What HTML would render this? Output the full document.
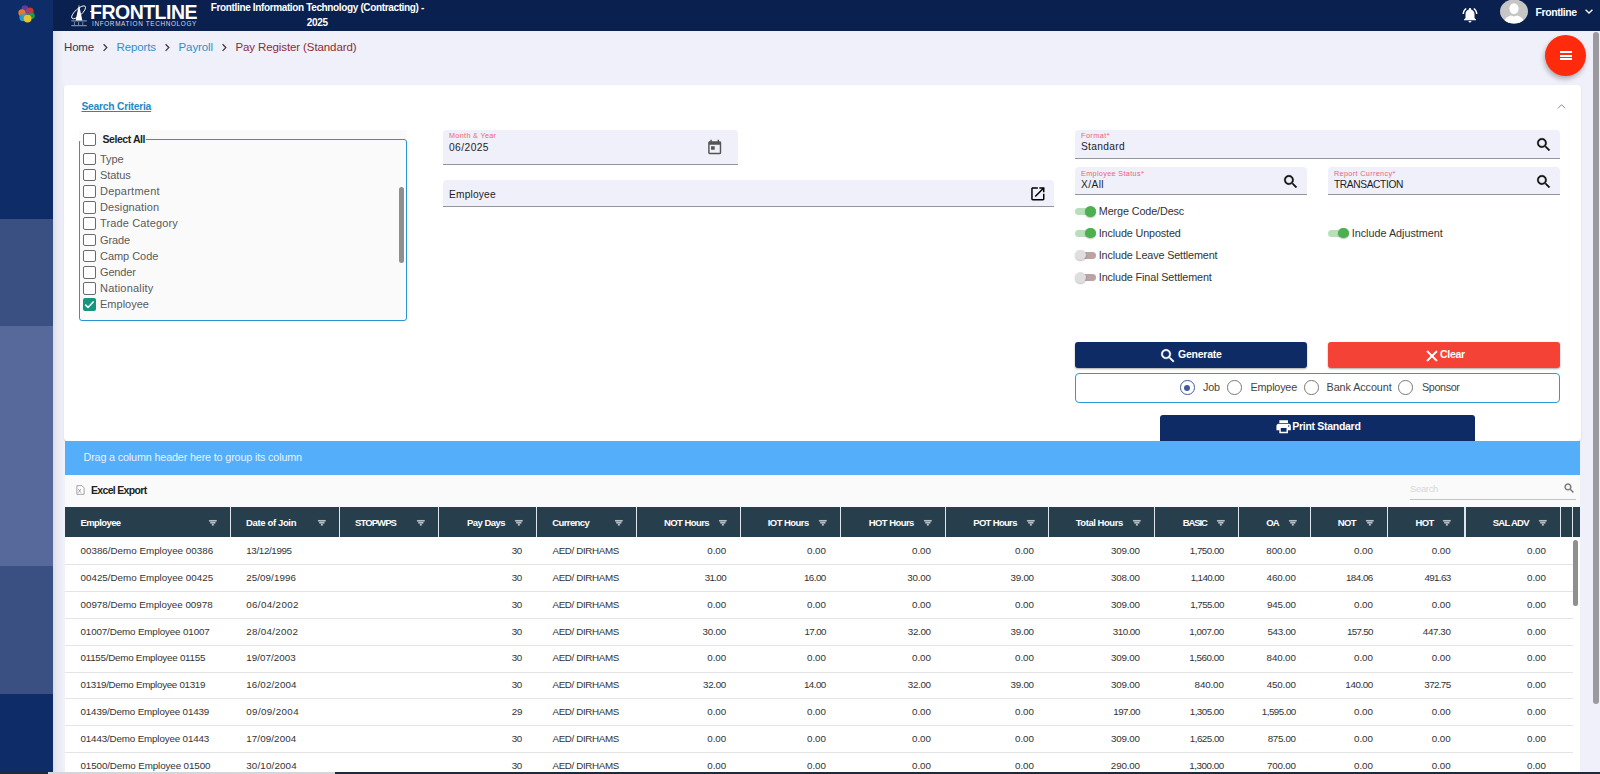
<!DOCTYPE html>
<html lang="en"><head><meta charset="utf-8"><title>Pay Register (Standard)</title>
<style>
html,body{margin:0;padding:0}
body{width:1600px;height:774px;overflow:hidden;position:relative;background:#eff0f9;font-family:"Liberation Sans",Arial,sans-serif;}
.t{position:absolute;white-space:pre;}
svg{position:absolute;overflow:visible}

</style></head>
<body>
<div style="position:absolute;left:53px;top:31px;width:11px;height:743px;background:linear-gradient(to right,#dadce6 0,#e6e7f0 30%,#eff0f9 100%);"></div>
<div style="position:absolute;left:0px;top:0px;width:53px;height:774px;background:#0e2c67;"></div>
<div style="position:absolute;left:0px;top:218.5px;width:53px;height:107.5px;background:#3b5082;"></div>
<div style="position:absolute;left:0px;top:326px;width:53px;height:239.5px;background:#56699a;"></div>
<div style="position:absolute;left:0px;top:565.5px;width:53px;height:128.5px;background:#3b5082;"></div>
<svg style="left:16px;top:3px;opacity:.92" width="22" height="22" viewBox="16 3 22 22"><circle cx="24.9" cy="8.6" r="3.4" fill="#6a3c9c"></circle><circle cx="30" cy="11.2" r="3.6" fill="#e0362c"></circle><circle cx="27.2" cy="12.4" r="3" fill="#a0409a" opacity=".75"></circle><circle cx="21.9" cy="12.8" r="3.6" fill="#f5822a"></circle><circle cx="31.4" cy="15.8" r="3.4" fill="#1fa345"></circle><circle cx="23" cy="17.6" r="3.6" fill="#27a5e0"></circle><circle cx="24.5" cy="14.8" r="2.6" fill="#8a9a80" opacity=".6"></circle><circle cx="27.6" cy="18.6" r="3.9" fill="#fbd426"></circle></svg>
<div style="position:absolute;left:53px;top:0px;width:1547px;height:31px;background:#0a204e;"></div>
<svg style="left:70px;top:3px" width="19" height="25" viewBox="70 3 19 25"><ellipse cx="78.6" cy="12.3" rx="8.9" ry="3.3" transform="rotate(-42 78.6 12.3)" fill="none" stroke="#fff" stroke-width="0.9"></ellipse><path d="M79 4.6 L75.6 20.8 L82.4 20.8 Z" fill="#fff"></path><path d="M71.3 20.9H86.8M71.3 25.7H86.8" stroke="#93a2c0" stroke-width="1" fill="none"></path><path d="M74.4 22v3M78.6 22v3M82.8 22v3" stroke="#93a2c0" stroke-width="0.8" fill="none"></path></svg>
<span class="t" style="left: 90px; top: 3.01px; font-size: 19.5px; line-height: 19.5px; color: rgb(255, 255, 255); font-weight: 700; letter-spacing: -0.51px;">FRONTLINE</span>
<div style="position:absolute;left:89.5px;top:10.8px;width:3.5px;height:1.6px;background:#fff;"></div>
<div style="position:absolute;left:186.5px;top:10.8px;width:5px;height:1.6px;background:#fff;"></div>
<span class="t" style="left: 92px; top: 21px; font-size: 6.4px; line-height: 6.4px; color: rgb(211, 217, 230); font-weight: 400; letter-spacing: 0.65px;">INFORMATION TECHNOLOGY</span>
<span class="t" style="left: 210.8px; top: 3.01px; font-size: 10px; line-height: 10px; color: rgb(255, 255, 255); font-weight: 700; letter-spacing: -0.36px;">Frontline Information Technology (Contracting) -</span>
<span class="t" style="left: 306.8px; top: 18.01px; font-size: 10px; line-height: 10px; color: rgb(255, 255, 255); font-weight: 700; letter-spacing: -0.31px;">2025</span>
<svg style="left:1460.5px;top:6.2px" width="18" height="18" viewBox="0 0 24 24"><path fill="#fff" d="M7.58 4.08L6.15 2.65C3.75 4.48 2.17 7.3 2.03 10.5h2c.15-2.65 1.51-4.97 3.55-6.42zm12.39 6.42h2c-.15-3.2-1.73-6.02-4.12-7.85l-1.42 1.43c2.02 1.45 3.39 3.77 3.54 6.42zM18 11c0-3.07-1.64-5.64-4.5-6.32V4c0-.83-.67-1.5-1.5-1.5s-1.5.67-1.5 1.5v.68C7.63 5.36 6 7.92 6 11v5l-2 2v1h16v-1l-2-2v-5zm-6 11c.14 0 .27-.01.4-.04.65-.14 1.18-.58 1.44-1.18.1-.24.15-.5.15-.78h-4c.01 1.1.9 2 2.01 2z"></path></svg>
<svg style="left:1500px;top:-1px" width="28" height="25" viewBox="0 0 28 25"><defs><clipPath id="av"><ellipse cx="14" cy="12.4" rx="14" ry="12"></ellipse></clipPath></defs><ellipse cx="14" cy="12.4" rx="14" ry="12" fill="#c6c6c6"></ellipse><g clip-path="url(#av)" fill="#fff"><ellipse cx="14" cy="9.6" rx="4.6" ry="5.4"></ellipse><path d="M3.5 25c0-5 4-7.6 7.4-8.6l3.1 1 3.1-1c3.4 1 7.4 3.6 7.4 8.600z"></path></g></svg>
<span class="t" style="left: 1535.5px; top: 7px; font-size: 10.5px; line-height: 10.5px; color: rgb(255, 255, 255); font-weight: 700; letter-spacing: -0.4px;">Frontline</span>
<svg style="left:1584px;top:8px" width="10" height="7" viewBox="0 0 10 7"><path d="M1.6 1.7L5 5l3.4-3.3" fill="none" stroke="#fff" stroke-width="1.3"></path></svg>
<span class="t" style="left: 64px; top: 42px; font-size: 11.5px; line-height: 11.5px; color: rgb(59, 58, 85); font-weight: 400; letter-spacing: -0.17px;">Home</span>
<span class="t" style="left: 116.5px; top: 42px; font-size: 11.5px; line-height: 11.5px; color: rgb(47, 143, 201); font-weight: 400; letter-spacing: -0.11px;">Reports</span>
<span class="t" style="left: 178.5px; top: 42px; font-size: 11.5px; line-height: 11.5px; color: rgb(47, 143, 201); font-weight: 400; letter-spacing: -0.09px;">Payroll</span>
<span class="t" style="left: 235.4px; top: 42px; font-size: 11.5px; line-height: 11.5px; color: rgb(141, 43, 56); font-weight: 400; letter-spacing: -0.1px;">Pay Register (Standard)</span>
<svg style="left:102px;top:42.500px" width="7" height="9" viewBox="0 0 7 9"><path d="M1.6 1.300L4.8 4.6 1.6 7.9" fill="none" stroke="#4a3346" stroke-width="1.3"></path></svg>
<svg style="left:164px;top:42.500px" width="7" height="9" viewBox="0 0 7 9"><path d="M1.6 1.300L4.8 4.6 1.6 7.9" fill="none" stroke="#4a3346" stroke-width="1.3"></path></svg>
<svg style="left:220.9px;top:42.500px" width="7" height="9" viewBox="0 0 7 9"><path d="M1.6 1.300L4.8 4.6 1.6 7.9" fill="none" stroke="#4a3346" stroke-width="1.3"></path></svg>
<div style="position:absolute;left:1545px;top:34.5px;width:41px;height:41px;border-radius:50%;background:#ff2b0c;box-shadow:-1px 3px 5px rgba(0,0,0,.28);"></div>
<div style="position:absolute;left:1559.5px;top:51px;width:12px;height:2.2px;background:#fff;"></div>
<div style="position:absolute;left:1559.5px;top:54.6px;width:12px;height:2.2px;background:#fff;"></div>
<div style="position:absolute;left:1559.5px;top:58.2px;width:12px;height:2.2px;background:#fff;"></div>
<div style="position:absolute;left:64px;top:84.5px;width:1517px;height:356px;background:#fff;border-radius:4px;box-shadow:0 1px 2px rgba(0,0,0,.12);"></div>
<span class="t" style="left: 81.5px; top: 102px; font-size: 10.3px; line-height: 10.3px; color: rgb(31, 138, 198); font-weight: 700; text-decoration: underline; text-underline-offset: 1px; letter-spacing: -0.25px;">Search Criteria</span>
<svg style="left:1556px;top:102px" width="11" height="8" viewBox="0 0 11 8"><path d="M2 6.300L5.6 2.7 9.2 6.3" fill="none" stroke="#8a8a8a" stroke-width="1"></path></svg>
<div style="position:absolute;left:79px;top:130px;width:327.5px;height:190.5px;background:#fafafa;"></div>
<div style="position:absolute;left:79px;top:139px;width:325.5px;height:179.5px;border:1px solid #2b93cf;border-radius:3px;background:#fafafa;"></div>
<div style="position:absolute;left:79px;top:131px;width:67px;height:9.6px;background:#fafafa;"></div>
<div style="position:absolute;left:81.5px;top:131px;width:64.5px;height:16px;background:#fafafa;"></div>
<div style="position:absolute;left:83px;top:133.4px;width:10.6px;height:10.6px;border:1px solid #6a6a6a;border-radius:2px;background:#fff;"></div>
<span class="t" style="left: 102.5px; top: 134px; font-size: 10.5px; line-height: 10.5px; color: rgb(31, 31, 31); font-weight: 700; letter-spacing: -0.44px;">Select All</span>
<div style="position:absolute;left:83px;top:152.5px;width:10.6px;height:10.6px;border:1px solid #6a6a6a;border-radius:2px;background:#fff;"></div>
<span class="t" style="left: 100px; top: 154.01px; font-size: 11px; line-height: 11px; color: rgb(91, 91, 91); font-weight: 400; letter-spacing: -0.06px;">Type</span>
<div style="position:absolute;left:83px;top:168.71px;width:10.6px;height:10.6px;border:1px solid #6a6a6a;border-radius:2px;background:#fff;"></div>
<span class="t" style="left: 100px; top: 170px; font-size: 11px; line-height: 11px; color: rgb(91, 91, 91); font-weight: 400; letter-spacing: -0.08px;">Status</span>
<div style="position:absolute;left:83px;top:184.92000000000002px;width:10.6px;height:10.6px;border:1px solid #6a6a6a;border-radius:2px;background:#fff;"></div>
<span class="t" style="left: 100px; top: 186.01px; font-size: 11px; line-height: 11px; color: rgb(91, 91, 91); font-weight: 400; letter-spacing: 0.23px;">Department</span>
<div style="position:absolute;left:83px;top:201.13px;width:10.6px;height:10.6px;border:1px solid #6a6a6a;border-radius:2px;background:#fff;"></div>
<span class="t" style="left: 100px; top: 202.01px; font-size: 11px; line-height: 11px; color: rgb(91, 91, 91); font-weight: 400; letter-spacing: 0.1px;">Designation</span>
<div style="position:absolute;left:83px;top:217.34px;width:10.6px;height:10.6px;border:1px solid #6a6a6a;border-radius:2px;background:#fff;"></div>
<span class="t" style="left: 100px; top: 218.01px; font-size: 11px; line-height: 11px; color: rgb(91, 91, 91); font-weight: 400; letter-spacing: 0.13px;">Trade Category</span>
<div style="position:absolute;left:83px;top:233.55px;width:10.6px;height:10.6px;border:1px solid #6a6a6a;border-radius:2px;background:#fff;"></div>
<span class="t" style="left: 100px; top: 235.01px; font-size: 11px; line-height: 11px; color: rgb(91, 91, 91); font-weight: 400; letter-spacing: -0.12px;">Grade</span>
<div style="position:absolute;left:83px;top:249.76px;width:10.6px;height:10.6px;border:1px solid #6a6a6a;border-radius:2px;background:#fff;"></div>
<span class="t" style="left: 100px; top: 251px; font-size: 11px; line-height: 11px; color: rgb(91, 91, 91); font-weight: 400; letter-spacing: -0.04px;">Camp Code</span>
<div style="position:absolute;left:83px;top:265.97px;width:10.6px;height:10.6px;border:1px solid #6a6a6a;border-radius:2px;background:#fff;"></div>
<span class="t" style="left: 100px; top: 267.01px; font-size: 11px; line-height: 11px; color: rgb(91, 91, 91); font-weight: 400; letter-spacing: -0.17px;">Gender</span>
<div style="position:absolute;left:83px;top:282.18px;width:10.6px;height:10.6px;border:1px solid #6a6a6a;border-radius:2px;background:#fff;"></div>
<span class="t" style="left: 100px; top: 283px; font-size: 11px; line-height: 11px; color: rgb(91, 91, 91); font-weight: 400; letter-spacing: 0.2px;">Nationality</span>
<div style="position:absolute;left:83px;top:298.39px;width:12.6px;height:12.6px;background:#16967f;border-radius:2px;"><svg style="left:0;top:0" width="12.6" height="12.6" viewBox="0 0 12.6 12.6"><path d="M2.2 6.600L5 9.4 10.6 3.4" fill="none" stroke="#fff" stroke-width="1.5"></path></svg></div>
<span class="t" style="left: 100px; top: 299.01px; font-size: 11px; line-height: 11px; color: rgb(91, 91, 91); font-weight: 400; letter-spacing: 0.01px;">Employee</span>
<div style="position:absolute;left:398.6px;top:187px;width:5.5px;height:76px;background:#8f8f8f;border-radius:3px;"></div>
<div style="position:absolute;left:443px;top:130px;width:294.8px;height:35px;background:#f0f0fa;border-radius:4px 4px 0 0;"></div>
<div style="position:absolute;left:443px;top:164px;width:294.8px;height:1.2px;background:#93939d;"></div>
<span class="t" style="left: 449px; top: 132px; font-size: 7.2px; line-height: 7.2px; color: rgb(239, 95, 118); font-weight: 400; letter-spacing: 0.35px;">Month &amp; Year</span>
<span class="t" style="left: 449px; top: 143px; font-size: 10.2px; line-height: 10.2px; color: rgb(29, 29, 40); font-weight: 400; letter-spacing: 0.45px;">06/2025</span>
<svg style="left:705.8px;top:139.3px" width="17.4" height="17.4" viewBox="0 0 24 24" fill="#555"><path d="M19 3h-1V1h-2v2H8V1H6v2H5c-1.110 0-1.990.9-1.990 2L3 19c0 1.1.89 2 2 2h14c1.1 0 2-.9 2-2V5c0-1.1-.9-2-2-2zm0 16H5V8h14v11zM7 10h5v5H7z"></path></svg>
<div style="position:absolute;left:443px;top:180px;width:610.8px;height:27px;background:#f0f0fa;border-radius:4px 4px 0 0;"></div>
<div style="position:absolute;left:443px;top:206px;width:610.8px;height:1.2px;background:#93939d;"></div>
<span class="t" style="left: 449px; top: 190.01px; font-size: 10.2px; line-height: 10.2px; color: rgb(29, 29, 40); font-weight: 400; letter-spacing: 0.19px;">Employee</span>
<svg style="left:1029.3px;top:184.6px" width="17.7" height="17.7" viewBox="0 0 24 24" fill="#000"><path d="M19 19H5V5h7V3H5c-1.110 0-2 .9-2 2v14c0 1.1.89 2 2 2h14c1.1 0 2-.9 2-2v-7h-2v7zM14 3v2h3.590l-9.830 9.830 1.410 1.410L19 6.410V10h2V3h-7z"></path></svg>
<div style="position:absolute;left:1075px;top:130px;width:485px;height:29px;background:#f0f0fa;border-radius:4px 4px 0 0;"></div>
<div style="position:absolute;left:1075px;top:158px;width:485px;height:1.2px;background:#93939d;"></div>
<span class="t" style="left: 1081px; top: 132px; font-size: 7.2px; line-height: 7.2px; color: rgb(239, 95, 118); font-weight: 400; letter-spacing: 0.49px;">Format*</span>
<span class="t" style="left: 1081px; top: 142px; font-size: 10.2px; line-height: 10.2px; color: rgb(29, 29, 40); font-weight: 400; letter-spacing: 0.33px;">Standard</span>
<svg style="left:1535px;top:136.2px" width="17.5" height="17.5" viewBox="0 0 24 24" fill="#111" stroke="#111" stroke-width="0.5"><path d="M15.5 14h-.79l-.28-.27C15.410 12.590 16 11.110 16 9.5 16 5.910 13.090 3 9.5 3S3 5.910 3 9.5 5.910 16 9.5 16c1.610 0 3.090-.59 4.230-1.570l.27.28v.79l5 4.990L20.490 19l-4.990-5zm-6 0C7.010 14 5 11.990 5 9.500S7.010 5 9.5 5 14 7.010 14 9.5 11.990 14 9.5 14z"></path></svg>
<div style="position:absolute;left:1075px;top:167px;width:232px;height:28px;background:#f0f0fa;border-radius:4px 4px 0 0;"></div>
<div style="position:absolute;left:1075px;top:194px;width:232px;height:1.2px;background:#93939d;"></div>
<span class="t" style="left: 1081px; top: 170.01px; font-size: 7.2px; line-height: 7.2px; color: rgb(239, 95, 118); font-weight: 400; letter-spacing: 0.37px;">Employee Status*</span>
<span class="t" style="left: 1081px; top: 180.01px; font-size: 10.2px; line-height: 10.2px; color: rgb(29, 29, 40); font-weight: 400; letter-spacing: 0.41px;">X/All</span>
<svg style="left:1282.2px;top:172.6px" width="17.5" height="17.5" viewBox="0 0 24 24" fill="#111" stroke="#111" stroke-width="0.5"><path d="M15.5 14h-.79l-.28-.27C15.410 12.590 16 11.110 16 9.5 16 5.910 13.090 3 9.5 3S3 5.910 3 9.5 5.910 16 9.5 16c1.610 0 3.090-.59 4.230-1.570l.27.28v.79l5 4.990L20.490 19l-4.990-5zm-6 0C7.010 14 5 11.990 5 9.500S7.010 5 9.5 5 14 7.010 14 9.5 11.990 14 9.5 14z"></path></svg>
<div style="position:absolute;left:1328px;top:167px;width:232px;height:28px;background:#f0f0fa;border-radius:4px 4px 0 0;"></div>
<div style="position:absolute;left:1328px;top:194px;width:232px;height:1.2px;background:#93939d;"></div>
<span class="t" style="left: 1334px; top: 170.01px; font-size: 7.2px; line-height: 7.2px; color: rgb(239, 95, 118); font-weight: 400; letter-spacing: 0.38px;">Report Currency*</span>
<span class="t" style="left: 1334px; top: 180.01px; font-size: 10.2px; line-height: 10.2px; color: rgb(29, 29, 40); font-weight: 400; letter-spacing: -0.37px;">TRANSACTION</span>
<svg style="left:1535px;top:172.6px" width="17.5" height="17.5" viewBox="0 0 24 24" fill="#111" stroke="#111" stroke-width="0.5"><path d="M15.5 14h-.79l-.28-.27C15.410 12.590 16 11.110 16 9.5 16 5.910 13.090 3 9.5 3S3 5.910 3 9.5 5.910 16 9.5 16c1.610 0 3.090-.59 4.230-1.570l.27.28v.79l5 4.990L20.490 19l-4.990-5zm-6 0C7.010 14 5 11.990 5 9.500S7.010 5 9.5 5 14 7.010 14 9.5 11.990 14 9.5 14z"></path></svg>
<div style="position:absolute;left:1075px;top:207.8px;width:20.5px;height:7px;background:#b7dfb9;border-radius:3.5px;"></div>
<div style="position:absolute;left:1085px;top:205.9px;width:10.8px;height:10.8px;background:#4caf50;border-radius:50%;box-shadow:0 1px 1.5px rgba(0,0,0,.25);"></div>
<span class="t" style="left: 1098.75px; top: 206px; font-size: 10.8px; line-height: 10.8px; color: rgb(51, 51, 51); font-weight: 400; letter-spacing: -0.11px;">Merge Code/Desc</span>
<div style="position:absolute;left:1075px;top:229.5px;width:20.5px;height:7px;background:#b7dfb9;border-radius:3.5px;"></div>
<div style="position:absolute;left:1085px;top:227.6px;width:10.8px;height:10.8px;background:#4caf50;border-radius:50%;box-shadow:0 1px 1.5px rgba(0,0,0,.25);"></div>
<span class="t" style="left: 1098.75px; top: 228px; font-size: 10.8px; line-height: 10.8px; color: rgb(51, 51, 51); font-weight: 400; letter-spacing: -0.13px;">Include Unposted</span>
<div style="position:absolute;left:1328px;top:229.5px;width:20.5px;height:7px;background:#b7dfb9;border-radius:3.5px;"></div>
<div style="position:absolute;left:1338px;top:227.6px;width:10.8px;height:10.8px;background:#4caf50;border-radius:50%;box-shadow:0 1px 1.5px rgba(0,0,0,.25);"></div>
<span class="t" style="left: 1351.75px; top: 228px; font-size: 10.8px; line-height: 10.8px; color: rgb(51, 51, 51); font-weight: 400; letter-spacing: -0.01px;">Include Adjustment</span>
<div style="position:absolute;left:1076px;top:251.5px;width:20px;height:7px;background:#b9a3a3;border-radius:3.5px;"></div>
<div style="position:absolute;left:1075px;top:249.6px;width:10.8px;height:10.8px;background:#dedede;border-radius:50%;box-shadow:0 1px 1.5px rgba(0,0,0,.25);"></div>
<span class="t" style="left: 1098.75px; top: 250px; font-size: 10.8px; line-height: 10.8px; color: rgb(51, 51, 51); font-weight: 400; letter-spacing: -0.13px;">Include Leave Settlement</span>
<div style="position:absolute;left:1076px;top:273.8px;width:20px;height:7px;background:#b9a3a3;border-radius:3.5px;"></div>
<div style="position:absolute;left:1075px;top:271.90000000000003px;width:10.8px;height:10.8px;background:#dedede;border-radius:50%;box-shadow:0 1px 1.5px rgba(0,0,0,.25);"></div>
<span class="t" style="left: 1098.75px; top: 272px; font-size: 10.8px; line-height: 10.8px; color: rgb(51, 51, 51); font-weight: 400; letter-spacing: -0.12px;">Include Final Settlement</span>
<div style="position:absolute;left:1075px;top:342px;width:232px;height:26px;background:#0f2b66;border-radius:3px;box-shadow:0 1px 2px rgba(0,0,0,.35);"></div>
<svg style="left:1159.3px;top:346.9px" width="17.8" height="17.8" viewBox="0 0 24 24" fill="#fff" stroke="#fff" stroke-width="0.6"><path d="M15.5 14h-.79l-.28-.27C15.410 12.590 16 11.110 16 9.5 16 5.910 13.090 3 9.5 3S3 5.910 3 9.5 5.910 16 9.5 16c1.610 0 3.090-.59 4.230-1.570l.27.28v.79l5 4.990L20.490 19l-4.990-5zm-6 0C7.010 14 5 11.990 5 9.500S7.010 5 9.5 5 14 7.010 14 9.5 11.990 14 9.5 14z"></path></svg>
<span class="t" style="left: 1178px; top: 349px; font-size: 10.5px; line-height: 10.5px; color: rgb(255, 255, 255); font-weight: 700; letter-spacing: -0.24px;">Generate</span>
<div style="position:absolute;left:1328px;top:342px;width:232px;height:26px;background:#f44336;border-radius:3px;box-shadow:0 1px 2px rgba(0,0,0,.35);"></div>
<svg style="left:1422.5px;top:346.6px" width="18" height="18" viewBox="0 0 24 24" fill="#fff" stroke="#fff" stroke-width="1"><path d="M19 6.410L17.590 5 12 10.590 6.410 5 5 6.410 10.590 12 5 17.590 6.410 19 12 13.410 17.590 19 19 17.590 13.410 12z"></path></svg>
<span class="t" style="left: 1440px; top: 349px; font-size: 10.5px; line-height: 10.5px; color: rgb(255, 255, 255); font-weight: 700; letter-spacing: -0.3px;">Clear</span>
<div style="position:absolute;left:1075px;top:373.4px;width:483px;height:27.6px;border:1px solid #2b9ad8;border-radius:4px;background:#fff;"></div>
<div style="position:absolute;left:1180px;top:380.3px;width:12.6px;height:12.6px;border:1px solid #3f5b9c;border-radius:50%;"><div style="position:absolute;left:3.300px;top:3.300px;width:6px;height:6px;border-radius:50%;background:#3f5b9c"></div></div>
<span class="t" style="left: 1203px; top: 382px; font-size: 10.8px; line-height: 10.8px; color: rgb(68, 68, 68); font-weight: 400; letter-spacing: -0.14px;">Job</span>
<div style="position:absolute;left:1227px;top:380.3px;width:12.6px;height:12.6px;border:1px solid #777;border-radius:50%;"></div>
<span class="t" style="left: 1250.6px; top: 382px; font-size: 10.8px; line-height: 10.8px; color: rgb(68, 68, 68); font-weight: 400; letter-spacing: -0.21px;">Employee</span>
<div style="position:absolute;left:1304px;top:380.3px;width:12.6px;height:12.6px;border:1px solid #777;border-radius:50%;"></div>
<span class="t" style="left: 1326.6px; top: 382px; font-size: 10.8px; line-height: 10.8px; color: rgb(68, 68, 68); font-weight: 400; letter-spacing: -0.09px;">Bank Account</span>
<div style="position:absolute;left:1398px;top:380.3px;width:12.6px;height:12.6px;border:1px solid #777;border-radius:50%;"></div>
<span class="t" style="left: 1421.9px; top: 382px; font-size: 10.8px; line-height: 10.8px; color: rgb(68, 68, 68); font-weight: 400; letter-spacing: -0.36px;">Sponsor</span>
<div style="position:absolute;left:1160px;top:414.5px;width:314.8px;height:26px;background:#0f2b66;border-radius:3px 3px 0 0;"></div>
<svg style="left:1274.8px;top:417.8px" width="17.3" height="17.3" viewBox="0 0 24 24" fill="#fff"><path d="M19 8H5c-1.660 0-3 1.340-3 3v6h4v4h12v-4h4v-6c0-1.660-1.340-3-3-3zm-3 11H8v-5h8v5zm3-7c-.55 0-1-.45-1-1s.45-1 1-1 1 .45 1 1-.45 1-1 1zm-1-9H6v4h12V3z"></path></svg>
<span class="t" style="left: 1292.25px; top: 421px; font-size: 10.5px; line-height: 10.5px; color: rgb(255, 255, 255); font-weight: 700; letter-spacing: -0.29px;">Print Standard</span>
<div style="position:absolute;left:65px;top:440.5px;width:1515px;height:34.5px;background:#54aefa;"></div>
<span class="t" style="left: 83.5px; top: 452px; font-size: 10.8px; line-height: 10.8px; color: rgb(230, 242, 255); font-weight: 400; letter-spacing: -0.16px;">Drag a column header here to group its column</span>
<div style="position:absolute;left:65px;top:475px;width:1515px;height:32px;background:#fafafa;"></div>
<svg style="left:76px;top:485px" width="9" height="10" viewBox="0 0 9 10"><path d="M.9.700h5l2.2 2.200v6.400H.9z" fill="#fff" stroke="#8a8a8a" stroke-width=".8"></path><path d="M2.3 4l2.6 3.600M4.9 4L2.3 7.6" stroke="#8a8a8a" stroke-width=".8"></path></svg>
<span class="t" style="left: 91px; top: 485px; font-size: 10.5px; line-height: 10.5px; color: rgb(34, 34, 34); font-weight: 700; letter-spacing: -0.68px;">Excel Export</span>
<span class="t" style="left: 1410px; top: 484.01px; font-size: 9.5px; line-height: 9.5px; color: rgb(216, 216, 216); font-weight: 400; letter-spacing: -0.35px;">Search</span>
<div style="position:absolute;left:1410px;top:499.2px;width:166px;height:1px;background:#c4c4c4;"></div>
<svg style="left:1562.5px;top:481.6px" width="12.5" height="12.5" viewBox="0 0 24 24" fill="#707070" stroke="#707070" stroke-width="0.7"><path d="M15.5 14h-.79l-.28-.27C15.410 12.590 16 11.110 16 9.5 16 5.910 13.090 3 9.5 3S3 5.910 3 9.5 5.910 16 9.5 16c1.610 0 3.090-.59 4.230-1.570l.27.28v.79l5 4.990L20.490 19l-4.990-5zm-6 0C7.010 14 5 11.990 5 9.500S7.010 5 9.5 5 14 7.010 14 9.5 11.990 14 9.5 14z"></path></svg>
<div style="position:absolute;left:65px;top:507px;width:1515px;height:30.2px;background:#273e4d;"></div>
<div style="position:absolute;left:229.65px;top:507px;width:1.2px;height:30.2px;background:#dfe5ea;"></div>
<div style="position:absolute;left:338.65px;top:507px;width:1.2px;height:30.2px;background:#dfe5ea;"></div>
<div style="position:absolute;left:437.65px;top:507px;width:1.2px;height:30.2px;background:#dfe5ea;"></div>
<div style="position:absolute;left:535.9px;top:507px;width:1.2px;height:30.2px;background:#dfe5ea;"></div>
<div style="position:absolute;left:635.9px;top:507px;width:1.2px;height:30.2px;background:#dfe5ea;"></div>
<div style="position:absolute;left:739.9px;top:507px;width:1.2px;height:30.2px;background:#dfe5ea;"></div>
<div style="position:absolute;left:839.65px;top:507px;width:1.2px;height:30.2px;background:#dfe5ea;"></div>
<div style="position:absolute;left:944.65px;top:507px;width:1.2px;height:30.2px;background:#dfe5ea;"></div>
<div style="position:absolute;left:1047.65px;top:507px;width:1.2px;height:30.2px;background:#dfe5ea;"></div>
<div style="position:absolute;left:1153.65px;top:507px;width:1.2px;height:30.2px;background:#dfe5ea;"></div>
<div style="position:absolute;left:1237.65px;top:507px;width:1.2px;height:30.2px;background:#dfe5ea;"></div>
<div style="position:absolute;left:1309.65px;top:507px;width:1.2px;height:30.2px;background:#dfe5ea;"></div>
<div style="position:absolute;left:1386.65px;top:507px;width:1.2px;height:30.2px;background:#dfe5ea;"></div>
<div style="position:absolute;left:1464.4px;top:507px;width:1.2px;height:30.2px;background:#dfe5ea;"></div>
<div style="position:absolute;left:1559.65px;top:507px;width:1.2px;height:30.2px;background:#dfe5ea;"></div>
<div style="position:absolute;left:1571.9px;top:507px;width:1.2px;height:30.2px;background:#dfe5ea;"></div>
<svg style="left:207.55px;top:517.800px" width="9.7" height="9.7" viewBox="0 0 24 24" fill="#fff" stroke="#fff" stroke-width="0.8"><path d="M10 18h4v-2h-4v2zM3 6v2h18V6H3zm3 7h12v-2H6v2z"></path></svg>
<span class="t" style="left: 80.5px; top: 518.01px; font-size: 9.5px; line-height: 9.5px; color: rgb(255, 255, 255); font-weight: 700; letter-spacing: -0.61px;">Employee</span>
<svg style="left:316.55px;top:517.800px" width="9.7" height="9.7" viewBox="0 0 24 24" fill="#fff" stroke="#fff" stroke-width="0.8"><path d="M10 18h4v-2h-4v2zM3 6v2h18V6H3zm3 7h12v-2H6v2z"></path></svg>
<span class="t" style="left: 246.05px; top: 518.01px; font-size: 9.5px; line-height: 9.5px; color: rgb(255, 255, 255); font-weight: 700; letter-spacing: -0.36px;">Date of Join</span>
<svg style="left:415.55px;top:517.800px" width="9.7" height="9.7" viewBox="0 0 24 24" fill="#fff" stroke="#fff" stroke-width="0.8"><path d="M10 18h4v-2h-4v2zM3 6v2h18V6H3zm3 7h12v-2H6v2z"></path></svg>
<span class="t" style="left: 355.05px; top: 518.01px; font-size: 9.5px; line-height: 9.5px; color: rgb(255, 255, 255); font-weight: 700; letter-spacing: -0.91px;">STOPWPS</span>
<svg style="left:513.8px;top:517.800px" width="9.7" height="9.7" viewBox="0 0 24 24" fill="#fff" stroke="#fff" stroke-width="0.8"><path d="M10 18h4v-2h-4v2zM3 6v2h18V6H3zm3 7h12v-2H6v2z"></path></svg>
<span class="t" style="right: 1095px; top: 518.01px; font-size: 9.5px; line-height: 9.5px; color: rgb(255, 255, 255); font-weight: 700; letter-spacing: -0.53px;">Pay Days</span>
<svg style="left:613.8px;top:517.800px" width="9.7" height="9.7" viewBox="0 0 24 24" fill="#fff" stroke="#fff" stroke-width="0.8"><path d="M10 18h4v-2h-4v2zM3 6v2h18V6H3zm3 7h12v-2H6v2z"></path></svg>
<span class="t" style="left: 552.3px; top: 518.01px; font-size: 9.5px; line-height: 9.5px; color: rgb(255, 255, 255); font-weight: 700; letter-spacing: -0.61px;">Currency</span>
<svg style="left:717.8px;top:517.800px" width="9.7" height="9.7" viewBox="0 0 24 24" fill="#fff" stroke="#fff" stroke-width="0.8"><path d="M10 18h4v-2h-4v2zM3 6v2h18V6H3zm3 7h12v-2H6v2z"></path></svg>
<span class="t" style="right: 891px; top: 518.01px; font-size: 9.5px; line-height: 9.5px; color: rgb(255, 255, 255); font-weight: 700; letter-spacing: -0.57px;">NOT Hours</span>
<svg style="left:817.55px;top:517.800px" width="9.7" height="9.7" viewBox="0 0 24 24" fill="#fff" stroke="#fff" stroke-width="0.8"><path d="M10 18h4v-2h-4v2zM3 6v2h18V6H3zm3 7h12v-2H6v2z"></path></svg>
<span class="t" style="right: 791.25px; top: 518.01px; font-size: 9.5px; line-height: 9.5px; color: rgb(255, 255, 255); font-weight: 700; letter-spacing: -0.55px;">IOT Hours</span>
<svg style="left:922.55px;top:517.800px" width="9.7" height="9.7" viewBox="0 0 24 24" fill="#fff" stroke="#fff" stroke-width="0.8"><path d="M10 18h4v-2h-4v2zM3 6v2h18V6H3zm3 7h12v-2H6v2z"></path></svg>
<span class="t" style="right: 686.25px; top: 518.01px; font-size: 9.5px; line-height: 9.5px; color: rgb(255, 255, 255); font-weight: 700; letter-spacing: -0.57px;">HOT Hours</span>
<svg style="left:1025.55px;top:517.800px" width="9.7" height="9.7" viewBox="0 0 24 24" fill="#fff" stroke="#fff" stroke-width="0.8"><path d="M10 18h4v-2h-4v2zM3 6v2h18V6H3zm3 7h12v-2H6v2z"></path></svg>
<span class="t" style="right: 583.25px; top: 518.01px; font-size: 9.5px; line-height: 9.5px; color: rgb(255, 255, 255); font-weight: 700; letter-spacing: -0.68px;">POT Hours</span>
<svg style="left:1131.55px;top:517.800px" width="9.7" height="9.7" viewBox="0 0 24 24" fill="#fff" stroke="#fff" stroke-width="0.8"><path d="M10 18h4v-2h-4v2zM3 6v2h18V6H3zm3 7h12v-2H6v2z"></path></svg>
<span class="t" style="right: 477.25px; top: 518.01px; font-size: 9.5px; line-height: 9.5px; color: rgb(255, 255, 255); font-weight: 700; letter-spacing: -0.46px;">Total Hours</span>
<svg style="left:1215.55px;top:517.800px" width="9.7" height="9.7" viewBox="0 0 24 24" fill="#fff" stroke="#fff" stroke-width="0.8"><path d="M10 18h4v-2h-4v2zM3 6v2h18V6H3zm3 7h12v-2H6v2z"></path></svg>
<span class="t" style="right: 393.25px; top: 518.01px; font-size: 9.5px; line-height: 9.5px; color: rgb(255, 255, 255); font-weight: 700; letter-spacing: -1.11px;">BASIC</span>
<svg style="left:1287.55px;top:517.800px" width="9.7" height="9.7" viewBox="0 0 24 24" fill="#fff" stroke="#fff" stroke-width="0.8"><path d="M10 18h4v-2h-4v2zM3 6v2h18V6H3zm3 7h12v-2H6v2z"></path></svg>
<span class="t" style="right: 321.25px; top: 518.01px; font-size: 9.5px; line-height: 9.5px; color: rgb(255, 255, 255); font-weight: 700; letter-spacing: -0.87px;">OA</span>
<svg style="left:1364.55px;top:517.800px" width="9.7" height="9.7" viewBox="0 0 24 24" fill="#fff" stroke="#fff" stroke-width="0.8"><path d="M10 18h4v-2h-4v2zM3 6v2h18V6H3zm3 7h12v-2H6v2z"></path></svg>
<span class="t" style="right: 244.25px; top: 518.01px; font-size: 9.5px; line-height: 9.5px; color: rgb(255, 255, 255); font-weight: 700; letter-spacing: -0.69px;">NOT</span>
<svg style="left:1442.3px;top:517.800px" width="9.7" height="9.7" viewBox="0 0 24 24" fill="#fff" stroke="#fff" stroke-width="0.8"><path d="M10 18h4v-2h-4v2zM3 6v2h18V6H3zm3 7h12v-2H6v2z"></path></svg>
<span class="t" style="right: 166.5px; top: 518.01px; font-size: 9.5px; line-height: 9.5px; color: rgb(255, 255, 255); font-weight: 700; letter-spacing: -0.69px;">HOT</span>
<svg style="left:1537.55px;top:517.800px" width="9.7" height="9.7" viewBox="0 0 24 24" fill="#fff" stroke="#fff" stroke-width="0.8"><path d="M10 18h4v-2h-4v2zM3 6v2h18V6H3zm3 7h12v-2H6v2z"></path></svg>
<span class="t" style="right: 71.25px; top: 518.01px; font-size: 9.5px; line-height: 9.5px; color: rgb(255, 255, 255); font-weight: 700; letter-spacing: -0.74px;">SAL ADV</span>
<div style="position:absolute;left:65px;top:537.2px;width:1515px;height:236.8px;background:#fff;"></div>
<span class="t cl" style="left: 80.5px; top: 546.01px; font-size: 9.8px; line-height: 9.8px; color: rgb(51, 51, 51); font-weight: 400; letter-spacing: 0.01px;">00386/Demo Employee 00386</span>
<span class="t cl" style="left: 246.25px; top: 546.01px; font-size: 9.8px; line-height: 9.8px; color: rgb(51, 51, 51); font-weight: 400; letter-spacing: -0.36px;">13/12/1995</span>
<span class="t cr" style="right: 1078px; top: 546.01px; font-size: 9.8px; line-height: 9.8px; color: rgb(51, 51, 51); font-weight: 400; letter-spacing: -0.3px;">30</span>
<span class="t cl" style="left: 552.5px; top: 546.01px; font-size: 9.8px; line-height: 9.8px; color: rgb(51, 51, 51); font-weight: 400; letter-spacing: -0.36px;">AED/ DIRHAMS</span>
<span class="t cr" style="right: 874px; top: 546.01px; font-size: 9.8px; line-height: 9.8px; color: rgb(51, 51, 51); font-weight: 400; letter-spacing: -0.09px;">0.00</span>
<span class="t cr" style="right: 774.25px; top: 546.01px; font-size: 9.8px; line-height: 9.8px; color: rgb(51, 51, 51); font-weight: 400; letter-spacing: -0.09px;">0.00</span>
<span class="t cr" style="right: 669.25px; top: 546.01px; font-size: 9.8px; line-height: 9.8px; color: rgb(51, 51, 51); font-weight: 400; letter-spacing: -0.09px;">0.00</span>
<span class="t cr" style="right: 566.25px; top: 546.01px; font-size: 9.8px; line-height: 9.8px; color: rgb(51, 51, 51); font-weight: 400; letter-spacing: -0.09px;">0.00</span>
<span class="t cr" style="right: 460.25px; top: 546.01px; font-size: 9.8px; line-height: 9.8px; color: rgb(51, 51, 51); font-weight: 400; letter-spacing: -0.21px;">309.00</span>
<span class="t cr" style="right: 376.25px; top: 546.01px; font-size: 9.8px; line-height: 9.8px; color: rgb(51, 51, 51); font-weight: 400; letter-spacing: -0.53px;">1,750.00</span>
<span class="t cr" style="right: 304.25px; top: 546.01px; font-size: 9.8px; line-height: 9.8px; color: rgb(51, 51, 51); font-weight: 400; letter-spacing: -0.09px;">800.00</span>
<span class="t cr" style="right: 227.25px; top: 546.01px; font-size: 9.8px; line-height: 9.8px; color: rgb(51, 51, 51); font-weight: 400; letter-spacing: -0.09px;">0.00</span>
<span class="t cr" style="right: 149.5px; top: 546.01px; font-size: 9.8px; line-height: 9.8px; color: rgb(51, 51, 51); font-weight: 400; letter-spacing: -0.09px;">0.00</span>
<span class="t cr" style="right: 54.25px; top: 546.01px; font-size: 9.8px; line-height: 9.8px; color: rgb(51, 51, 51); font-weight: 400; letter-spacing: -0.09px;">0.00</span>
<div style="position:absolute;left:65px;top:564px;width:1507.5px;height:1px;background:#e4e4e4;"></div>
<span class="t cl" style="left: 80.5px; top: 573.01px; font-size: 9.8px; line-height: 9.8px; color: rgb(51, 51, 51); font-weight: 400; letter-spacing: 0.01px;">00425/Demo Employee 00425</span>
<span class="t cl" style="left: 246.25px; top: 573.01px; font-size: 9.8px; line-height: 9.8px; color: rgb(51, 51, 51); font-weight: 400; letter-spacing: 0.07px;">25/09/1996</span>
<span class="t cr" style="right: 1078px; top: 573.01px; font-size: 9.8px; line-height: 9.8px; color: rgb(51, 51, 51); font-weight: 400; letter-spacing: -0.3px;">30</span>
<span class="t cl" style="left: 552.5px; top: 573.01px; font-size: 9.8px; line-height: 9.8px; color: rgb(51, 51, 51); font-weight: 400; letter-spacing: -0.36px;">AED/ DIRHAMS</span>
<span class="t cr" style="right: 874px; top: 573.01px; font-size: 9.8px; line-height: 9.8px; color: rgb(51, 51, 51); font-weight: 400; letter-spacing: -0.63px;">31.00</span>
<span class="t cr" style="right: 774.25px; top: 573.01px; font-size: 9.8px; line-height: 9.8px; color: rgb(51, 51, 51); font-weight: 400; letter-spacing: -0.55px;">16.00</span>
<span class="t cr" style="right: 669.25px; top: 573.01px; font-size: 9.8px; line-height: 9.8px; color: rgb(51, 51, 51); font-weight: 400; letter-spacing: -0.21px;">30.00</span>
<span class="t cr" style="right: 566.25px; top: 573.01px; font-size: 9.8px; line-height: 9.8px; color: rgb(51, 51, 51); font-weight: 400; letter-spacing: -0.27px;">39.00</span>
<span class="t cr" style="right: 460.25px; top: 573.01px; font-size: 9.8px; line-height: 9.8px; color: rgb(51, 51, 51); font-weight: 400; letter-spacing: -0.21px;">308.00</span>
<span class="t cr" style="right: 376.25px; top: 573.01px; font-size: 9.8px; line-height: 9.8px; color: rgb(51, 51, 51); font-weight: 400; letter-spacing: -0.64px;">1,140.00</span>
<span class="t cr" style="right: 304.25px; top: 573.01px; font-size: 9.8px; line-height: 9.8px; color: rgb(51, 51, 51); font-weight: 400; letter-spacing: -0.13px;">460.00</span>
<span class="t cr" style="right: 227.25px; top: 573.01px; font-size: 9.8px; line-height: 9.8px; color: rgb(51, 51, 51); font-weight: 400; letter-spacing: -0.53px;">184.06</span>
<span class="t cr" style="right: 149.5px; top: 573.01px; font-size: 9.8px; line-height: 9.8px; color: rgb(51, 51, 51); font-weight: 400; letter-spacing: -0.64px;">491.63</span>
<span class="t cr" style="right: 54.25px; top: 573.01px; font-size: 9.8px; line-height: 9.8px; color: rgb(51, 51, 51); font-weight: 400; letter-spacing: -0.09px;">0.00</span>
<div style="position:absolute;left:65px;top:591px;width:1507.5px;height:1px;background:#e4e4e4;"></div>
<span class="t cl" style="left: 80.5px; top: 600.01px; font-size: 9.8px; line-height: 9.8px; color: rgb(51, 51, 51); font-weight: 400; letter-spacing: -0.01px;">00978/Demo Employee 00978</span>
<span class="t cl" style="left: 246.25px; top: 600.01px; font-size: 9.8px; line-height: 9.8px; color: rgb(51, 51, 51); font-weight: 400; letter-spacing: 0.35px;">06/04/2002</span>
<span class="t cr" style="right: 1078px; top: 600.01px; font-size: 9.8px; line-height: 9.8px; color: rgb(51, 51, 51); font-weight: 400; letter-spacing: -0.3px;">30</span>
<span class="t cl" style="left: 552.5px; top: 600.01px; font-size: 9.8px; line-height: 9.8px; color: rgb(51, 51, 51); font-weight: 400; letter-spacing: -0.36px;">AED/ DIRHAMS</span>
<span class="t cr" style="right: 874px; top: 600.01px; font-size: 9.8px; line-height: 9.8px; color: rgb(51, 51, 51); font-weight: 400; letter-spacing: -0.09px;">0.00</span>
<span class="t cr" style="right: 774.25px; top: 600.01px; font-size: 9.8px; line-height: 9.8px; color: rgb(51, 51, 51); font-weight: 400; letter-spacing: -0.09px;">0.00</span>
<span class="t cr" style="right: 669.25px; top: 600.01px; font-size: 9.8px; line-height: 9.8px; color: rgb(51, 51, 51); font-weight: 400; letter-spacing: -0.09px;">0.00</span>
<span class="t cr" style="right: 566.25px; top: 600.01px; font-size: 9.8px; line-height: 9.8px; color: rgb(51, 51, 51); font-weight: 400; letter-spacing: -0.09px;">0.00</span>
<span class="t cr" style="right: 460.25px; top: 600.01px; font-size: 9.8px; line-height: 9.8px; color: rgb(51, 51, 51); font-weight: 400; letter-spacing: -0.21px;">309.00</span>
<span class="t cr" style="right: 376.25px; top: 600.01px; font-size: 9.8px; line-height: 9.8px; color: rgb(51, 51, 51); font-weight: 400; letter-spacing: -0.59px;">1,755.00</span>
<span class="t cr" style="right: 304.25px; top: 600.01px; font-size: 9.8px; line-height: 9.8px; color: rgb(51, 51, 51); font-weight: 400; letter-spacing: -0.21px;">945.00</span>
<span class="t cr" style="right: 227.25px; top: 600.01px; font-size: 9.8px; line-height: 9.8px; color: rgb(51, 51, 51); font-weight: 400; letter-spacing: -0.09px;">0.00</span>
<span class="t cr" style="right: 149.5px; top: 600.01px; font-size: 9.8px; line-height: 9.8px; color: rgb(51, 51, 51); font-weight: 400; letter-spacing: -0.09px;">0.00</span>
<span class="t cr" style="right: 54.25px; top: 600.01px; font-size: 9.8px; line-height: 9.8px; color: rgb(51, 51, 51); font-weight: 400; letter-spacing: -0.09px;">0.00</span>
<div style="position:absolute;left:65px;top:618px;width:1507.5px;height:1px;background:#e4e4e4;"></div>
<span class="t cl" style="left: 80.5px; top: 627.01px; font-size: 9.8px; line-height: 9.8px; color: rgb(51, 51, 51); font-weight: 400; letter-spacing: -0.13px;">01007/Demo Employee 01007</span>
<span class="t cl" style="left: 246.25px; top: 627.01px; font-size: 9.8px; line-height: 9.8px; color: rgb(51, 51, 51); font-weight: 400; letter-spacing: 0.3px;">28/04/2002</span>
<span class="t cr" style="right: 1078px; top: 627.01px; font-size: 9.8px; line-height: 9.8px; color: rgb(51, 51, 51); font-weight: 400; letter-spacing: -0.3px;">30</span>
<span class="t cl" style="left: 552.5px; top: 627.01px; font-size: 9.8px; line-height: 9.8px; color: rgb(51, 51, 51); font-weight: 400; letter-spacing: -0.36px;">AED/ DIRHAMS</span>
<span class="t cr" style="right: 874px; top: 627.01px; font-size: 9.8px; line-height: 9.8px; color: rgb(51, 51, 51); font-weight: 400; letter-spacing: -0.21px;">30.00</span>
<span class="t cr" style="right: 774.25px; top: 627.01px; font-size: 9.8px; line-height: 9.8px; color: rgb(51, 51, 51); font-weight: 400; letter-spacing: -0.67px;">17.00</span>
<span class="t cr" style="right: 669.25px; top: 627.01px; font-size: 9.8px; line-height: 9.8px; color: rgb(51, 51, 51); font-weight: 400; letter-spacing: -0.31px;">32.00</span>
<span class="t cr" style="right: 566.25px; top: 627.01px; font-size: 9.8px; line-height: 9.8px; color: rgb(51, 51, 51); font-weight: 400; letter-spacing: -0.27px;">39.00</span>
<span class="t cr" style="right: 460.25px; top: 627.01px; font-size: 9.8px; line-height: 9.8px; color: rgb(51, 51, 51); font-weight: 400; letter-spacing: -0.51px;">310.00</span>
<span class="t cr" style="right: 376.25px; top: 627.01px; font-size: 9.8px; line-height: 9.8px; color: rgb(51, 51, 51); font-weight: 400; letter-spacing: -0.47px;">1,007.00</span>
<span class="t cr" style="right: 304.25px; top: 627.01px; font-size: 9.8px; line-height: 9.8px; color: rgb(51, 51, 51); font-weight: 400; letter-spacing: -0.28px;">543.00</span>
<span class="t cr" style="right: 227.25px; top: 627.01px; font-size: 9.8px; line-height: 9.8px; color: rgb(51, 51, 51); font-weight: 400; letter-spacing: -0.71px;">157.50</span>
<span class="t cr" style="right: 149.5px; top: 627.01px; font-size: 9.8px; line-height: 9.8px; color: rgb(51, 51, 51); font-weight: 400; letter-spacing: -0.38px;">447.30</span>
<span class="t cr" style="right: 54.25px; top: 627.01px; font-size: 9.8px; line-height: 9.8px; color: rgb(51, 51, 51); font-weight: 400; letter-spacing: -0.09px;">0.00</span>
<div style="position:absolute;left:65px;top:645px;width:1507.5px;height:1px;background:#e4e4e4;"></div>
<span class="t cl" style="left: 80.5px; top: 653.01px; font-size: 9.8px; line-height: 9.8px; color: rgb(51, 51, 51); font-weight: 400; letter-spacing: -0.25px;">01155/Demo Employee 01155</span>
<span class="t cl" style="left: 246.25px; top: 653.01px; font-size: 9.8px; line-height: 9.8px; color: rgb(51, 51, 51); font-weight: 400; letter-spacing: 0.05px;">19/07/2003</span>
<span class="t cr" style="right: 1078px; top: 653.01px; font-size: 9.8px; line-height: 9.8px; color: rgb(51, 51, 51); font-weight: 400; letter-spacing: -0.3px;">30</span>
<span class="t cl" style="left: 552.5px; top: 653.01px; font-size: 9.8px; line-height: 9.8px; color: rgb(51, 51, 51); font-weight: 400; letter-spacing: -0.36px;">AED/ DIRHAMS</span>
<span class="t cr" style="right: 874px; top: 653.01px; font-size: 9.8px; line-height: 9.8px; color: rgb(51, 51, 51); font-weight: 400; letter-spacing: -0.09px;">0.00</span>
<span class="t cr" style="right: 774.25px; top: 653.01px; font-size: 9.8px; line-height: 9.8px; color: rgb(51, 51, 51); font-weight: 400; letter-spacing: -0.09px;">0.00</span>
<span class="t cr" style="right: 669.25px; top: 653.01px; font-size: 9.8px; line-height: 9.8px; color: rgb(51, 51, 51); font-weight: 400; letter-spacing: -0.09px;">0.00</span>
<span class="t cr" style="right: 566.25px; top: 653.01px; font-size: 9.8px; line-height: 9.8px; color: rgb(51, 51, 51); font-weight: 400; letter-spacing: -0.09px;">0.00</span>
<span class="t cr" style="right: 460.25px; top: 653.01px; font-size: 9.8px; line-height: 9.8px; color: rgb(51, 51, 51); font-weight: 400; letter-spacing: -0.21px;">309.00</span>
<span class="t cr" style="right: 376.25px; top: 653.01px; font-size: 9.8px; line-height: 9.8px; color: rgb(51, 51, 51); font-weight: 400; letter-spacing: -0.46px;">1,560.00</span>
<span class="t cr" style="right: 304.25px; top: 653.01px; font-size: 9.8px; line-height: 9.8px; color: rgb(51, 51, 51); font-weight: 400; letter-spacing: -0.13px;">840.00</span>
<span class="t cr" style="right: 227.25px; top: 653.01px; font-size: 9.8px; line-height: 9.8px; color: rgb(51, 51, 51); font-weight: 400; letter-spacing: -0.09px;">0.00</span>
<span class="t cr" style="right: 149.5px; top: 653.01px; font-size: 9.8px; line-height: 9.8px; color: rgb(51, 51, 51); font-weight: 400; letter-spacing: -0.09px;">0.00</span>
<span class="t cr" style="right: 54.25px; top: 653.01px; font-size: 9.8px; line-height: 9.8px; color: rgb(51, 51, 51); font-weight: 400; letter-spacing: -0.09px;">0.00</span>
<div style="position:absolute;left:65px;top:672px;width:1507.5px;height:1px;background:#e4e4e4;"></div>
<span class="t cl" style="left: 80.5px; top: 680.01px; font-size: 9.8px; line-height: 9.8px; color: rgb(51, 51, 51); font-weight: 400; letter-spacing: -0.31px;">01319/Demo Employee 01319</span>
<span class="t cl" style="left: 246.25px; top: 680.01px; font-size: 9.8px; line-height: 9.8px; color: rgb(51, 51, 51); font-weight: 400; letter-spacing: 0.14px;">16/02/2004</span>
<span class="t cr" style="right: 1078px; top: 680.01px; font-size: 9.8px; line-height: 9.8px; color: rgb(51, 51, 51); font-weight: 400; letter-spacing: -0.3px;">30</span>
<span class="t cl" style="left: 552.5px; top: 680.01px; font-size: 9.8px; line-height: 9.8px; color: rgb(51, 51, 51); font-weight: 400; letter-spacing: -0.36px;">AED/ DIRHAMS</span>
<span class="t cr" style="right: 874px; top: 680.01px; font-size: 9.8px; line-height: 9.8px; color: rgb(51, 51, 51); font-weight: 400; letter-spacing: -0.31px;">32.00</span>
<span class="t cr" style="right: 774.25px; top: 680.01px; font-size: 9.8px; line-height: 9.8px; color: rgb(51, 51, 51); font-weight: 400; letter-spacing: -0.53px;">14.00</span>
<span class="t cr" style="right: 669.25px; top: 680.01px; font-size: 9.8px; line-height: 9.8px; color: rgb(51, 51, 51); font-weight: 400; letter-spacing: -0.31px;">32.00</span>
<span class="t cr" style="right: 566.25px; top: 680.01px; font-size: 9.8px; line-height: 9.8px; color: rgb(51, 51, 51); font-weight: 400; letter-spacing: -0.27px;">39.00</span>
<span class="t cr" style="right: 460.25px; top: 680.01px; font-size: 9.8px; line-height: 9.8px; color: rgb(51, 51, 51); font-weight: 400; letter-spacing: -0.21px;">309.00</span>
<span class="t cr" style="right: 376.25px; top: 680.01px; font-size: 9.8px; line-height: 9.8px; color: rgb(51, 51, 51); font-weight: 400; letter-spacing: -0.13px;">840.00</span>
<span class="t cr" style="right: 304.25px; top: 680.01px; font-size: 9.8px; line-height: 9.8px; color: rgb(51, 51, 51); font-weight: 400; letter-spacing: -0.16px;">450.00</span>
<span class="t cr" style="right: 227.25px; top: 680.01px; font-size: 9.8px; line-height: 9.8px; color: rgb(51, 51, 51); font-weight: 400; letter-spacing: -0.43px;">140.00</span>
<span class="t cr" style="right: 149.5px; top: 680.01px; font-size: 9.8px; line-height: 9.8px; color: rgb(51, 51, 51); font-weight: 400; letter-spacing: -0.63px;">372.75</span>
<span class="t cr" style="right: 54.25px; top: 680.01px; font-size: 9.8px; line-height: 9.8px; color: rgb(51, 51, 51); font-weight: 400; letter-spacing: -0.09px;">0.00</span>
<div style="position:absolute;left:65px;top:698px;width:1507.5px;height:1px;background:#e4e4e4;"></div>
<span class="t cl" style="left: 80.5px; top: 707.01px; font-size: 9.8px; line-height: 9.8px; color: rgb(51, 51, 51); font-weight: 400; letter-spacing: -0.15px;">01439/Demo Employee 01439</span>
<span class="t cl" style="left: 246.25px; top: 707.01px; font-size: 9.8px; line-height: 9.8px; color: rgb(51, 51, 51); font-weight: 400; letter-spacing: 0.37px;">09/09/2004</span>
<span class="t cr" style="right: 1078px; top: 707.01px; font-size: 9.8px; line-height: 9.8px; color: rgb(51, 51, 51); font-weight: 400; letter-spacing: -0.35px;">29</span>
<span class="t cl" style="left: 552.5px; top: 707.01px; font-size: 9.8px; line-height: 9.8px; color: rgb(51, 51, 51); font-weight: 400; letter-spacing: -0.36px;">AED/ DIRHAMS</span>
<span class="t cr" style="right: 874px; top: 707.01px; font-size: 9.8px; line-height: 9.8px; color: rgb(51, 51, 51); font-weight: 400; letter-spacing: -0.09px;">0.00</span>
<span class="t cr" style="right: 774.25px; top: 707.01px; font-size: 9.8px; line-height: 9.8px; color: rgb(51, 51, 51); font-weight: 400; letter-spacing: -0.09px;">0.00</span>
<span class="t cr" style="right: 669.25px; top: 707.01px; font-size: 9.8px; line-height: 9.8px; color: rgb(51, 51, 51); font-weight: 400; letter-spacing: -0.09px;">0.00</span>
<span class="t cr" style="right: 566.25px; top: 707.01px; font-size: 9.8px; line-height: 9.8px; color: rgb(51, 51, 51); font-weight: 400; letter-spacing: -0.09px;">0.00</span>
<span class="t cr" style="right: 460.25px; top: 707.01px; font-size: 9.8px; line-height: 9.8px; color: rgb(51, 51, 51); font-weight: 400; letter-spacing: -0.59px;">197.00</span>
<span class="t cr" style="right: 376.25px; top: 707.01px; font-size: 9.8px; line-height: 9.8px; color: rgb(51, 51, 51); font-weight: 400; letter-spacing: -0.51px;">1,305.00</span>
<span class="t cr" style="right: 304.25px; top: 707.01px; font-size: 9.8px; line-height: 9.8px; color: rgb(51, 51, 51); font-weight: 400; letter-spacing: -0.52px;">1,595.00</span>
<span class="t cr" style="right: 227.25px; top: 707.01px; font-size: 9.8px; line-height: 9.8px; color: rgb(51, 51, 51); font-weight: 400; letter-spacing: -0.09px;">0.00</span>
<span class="t cr" style="right: 149.5px; top: 707.01px; font-size: 9.8px; line-height: 9.8px; color: rgb(51, 51, 51); font-weight: 400; letter-spacing: -0.09px;">0.00</span>
<span class="t cr" style="right: 54.25px; top: 707.01px; font-size: 9.8px; line-height: 9.8px; color: rgb(51, 51, 51); font-weight: 400; letter-spacing: -0.09px;">0.00</span>
<div style="position:absolute;left:65px;top:725px;width:1507.5px;height:1px;background:#e4e4e4;"></div>
<span class="t cl" style="left: 80.5px; top: 734.01px; font-size: 9.8px; line-height: 9.8px; color: rgb(51, 51, 51); font-weight: 400; letter-spacing: -0.15px;">01443/Demo Employee 01443</span>
<span class="t cl" style="left: 246.25px; top: 734.01px; font-size: 9.8px; line-height: 9.8px; color: rgb(51, 51, 51); font-weight: 400; letter-spacing: 0.1px;">17/09/2004</span>
<span class="t cr" style="right: 1078px; top: 734.01px; font-size: 9.8px; line-height: 9.8px; color: rgb(51, 51, 51); font-weight: 400; letter-spacing: -0.3px;">30</span>
<span class="t cl" style="left: 552.5px; top: 734.01px; font-size: 9.8px; line-height: 9.8px; color: rgb(51, 51, 51); font-weight: 400; letter-spacing: -0.36px;">AED/ DIRHAMS</span>
<span class="t cr" style="right: 874px; top: 734.01px; font-size: 9.8px; line-height: 9.8px; color: rgb(51, 51, 51); font-weight: 400; letter-spacing: -0.09px;">0.00</span>
<span class="t cr" style="right: 774.25px; top: 734.01px; font-size: 9.8px; line-height: 9.8px; color: rgb(51, 51, 51); font-weight: 400; letter-spacing: -0.09px;">0.00</span>
<span class="t cr" style="right: 669.25px; top: 734.01px; font-size: 9.8px; line-height: 9.8px; color: rgb(51, 51, 51); font-weight: 400; letter-spacing: -0.09px;">0.00</span>
<span class="t cr" style="right: 566.25px; top: 734.01px; font-size: 9.8px; line-height: 9.8px; color: rgb(51, 51, 51); font-weight: 400; letter-spacing: -0.09px;">0.00</span>
<span class="t cr" style="right: 460.25px; top: 734.01px; font-size: 9.8px; line-height: 9.8px; color: rgb(51, 51, 51); font-weight: 400; letter-spacing: -0.21px;">309.00</span>
<span class="t cr" style="right: 376.25px; top: 734.01px; font-size: 9.8px; line-height: 9.8px; color: rgb(51, 51, 51); font-weight: 400; letter-spacing: -0.52px;">1,625.00</span>
<span class="t cr" style="right: 304.25px; top: 734.01px; font-size: 9.8px; line-height: 9.8px; color: rgb(51, 51, 51); font-weight: 400; letter-spacing: -0.33px;">875.00</span>
<span class="t cr" style="right: 227.25px; top: 734.01px; font-size: 9.8px; line-height: 9.8px; color: rgb(51, 51, 51); font-weight: 400; letter-spacing: -0.09px;">0.00</span>
<span class="t cr" style="right: 149.5px; top: 734.01px; font-size: 9.8px; line-height: 9.8px; color: rgb(51, 51, 51); font-weight: 400; letter-spacing: -0.09px;">0.00</span>
<span class="t cr" style="right: 54.25px; top: 734.01px; font-size: 9.8px; line-height: 9.8px; color: rgb(51, 51, 51); font-weight: 400; letter-spacing: -0.09px;">0.00</span>
<div style="position:absolute;left:65px;top:752px;width:1507.5px;height:1px;background:#e4e4e4;"></div>
<span class="t cl" style="left: 80.5px; top: 761.01px; font-size: 9.8px; line-height: 9.8px; color: rgb(51, 51, 51); font-weight: 400; letter-spacing: -0.1px;">01500/Demo Employee 01500</span>
<span class="t cl" style="left: 246.25px; top: 761.01px; font-size: 9.8px; line-height: 9.8px; color: rgb(51, 51, 51); font-weight: 400; letter-spacing: 0.15px;">30/10/2004</span>
<span class="t cr" style="right: 1078px; top: 761.01px; font-size: 9.8px; line-height: 9.8px; color: rgb(51, 51, 51); font-weight: 400; letter-spacing: -0.3px;">30</span>
<span class="t cl" style="left: 552.5px; top: 761.01px; font-size: 9.8px; line-height: 9.8px; color: rgb(51, 51, 51); font-weight: 400; letter-spacing: -0.36px;">AED/ DIRHAMS</span>
<span class="t cr" style="right: 874px; top: 761.01px; font-size: 9.8px; line-height: 9.8px; color: rgb(51, 51, 51); font-weight: 400; letter-spacing: -0.09px;">0.00</span>
<span class="t cr" style="right: 774.25px; top: 761.01px; font-size: 9.8px; line-height: 9.8px; color: rgb(51, 51, 51); font-weight: 400; letter-spacing: -0.09px;">0.00</span>
<span class="t cr" style="right: 669.25px; top: 761.01px; font-size: 9.8px; line-height: 9.8px; color: rgb(51, 51, 51); font-weight: 400; letter-spacing: -0.09px;">0.00</span>
<span class="t cr" style="right: 566.25px; top: 761.01px; font-size: 9.8px; line-height: 9.8px; color: rgb(51, 51, 51); font-weight: 400; letter-spacing: -0.09px;">0.00</span>
<span class="t cr" style="right: 460.25px; top: 761.01px; font-size: 9.8px; line-height: 9.8px; color: rgb(51, 51, 51); font-weight: 400; letter-spacing: -0.18px;">290.00</span>
<span class="t cr" style="right: 376.25px; top: 761.01px; font-size: 9.8px; line-height: 9.8px; color: rgb(51, 51, 51); font-weight: 400; letter-spacing: -0.44px;">1,300.00</span>
<span class="t cr" style="right: 304.25px; top: 761.01px; font-size: 9.8px; line-height: 9.8px; color: rgb(51, 51, 51); font-weight: 400; letter-spacing: -0.19px;">700.00</span>
<span class="t cr" style="right: 227.25px; top: 761.01px; font-size: 9.8px; line-height: 9.8px; color: rgb(51, 51, 51); font-weight: 400; letter-spacing: -0.09px;">0.00</span>
<span class="t cr" style="right: 149.5px; top: 761.01px; font-size: 9.8px; line-height: 9.8px; color: rgb(51, 51, 51); font-weight: 400; letter-spacing: -0.09px;">0.00</span>
<span class="t cr" style="right: 54.25px; top: 761.01px; font-size: 9.8px; line-height: 9.8px; color: rgb(51, 51, 51); font-weight: 400; letter-spacing: -0.09px;">0.00</span>
<div style="position:absolute;left:1573.25px;top:539.5px;width:5px;height:66.5px;background:#8f8f8f;border-radius:2.500px;"></div>
<div style="position:absolute;left:1593.3px;top:32px;width:5.7px;height:671.5px;background:#9a9aa0;border-radius:3px;"></div>
<div style="position:absolute;left:0px;top:772px;width:48px;height:2px;background:#1d2a3a;"></div>
<div style="position:absolute;left:48px;top:772px;width:287px;height:2px;background:#d4d6dc;"></div>
<div style="position:absolute;left:335px;top:772px;width:1265px;height:2px;background:#1d2a3a;"></div>

</body></html>
